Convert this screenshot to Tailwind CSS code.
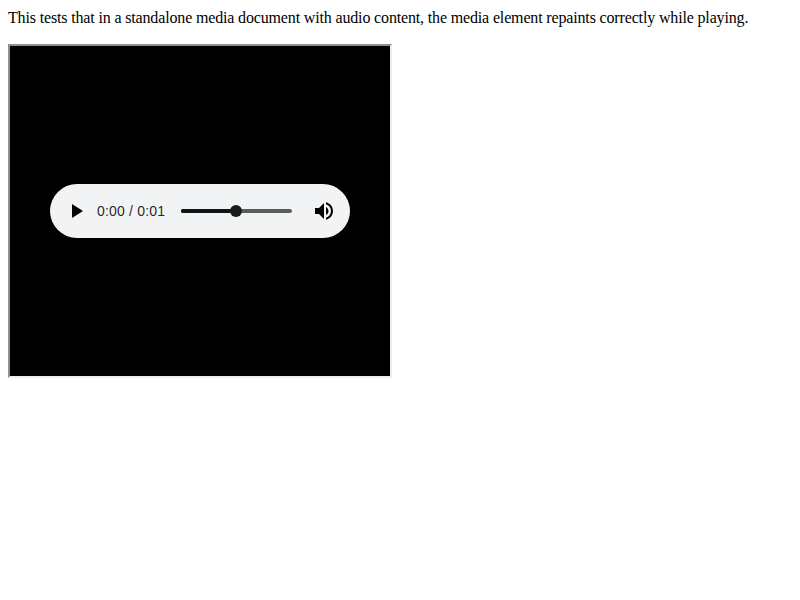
<!DOCTYPE html>
<html lang="en">
<head>
<meta charset="utf-8">
<title>Media document repaint</title>
<script src="https://cdn.jsdelivr.net/npm/@tailwindcss/browser@4"></script>
</head>
<body class="bg-white p-2 text-black">
<p class="font-['Liberation_Serif',serif] text-[16px] leading-[20px] tracking-[-0.154px] whitespace-nowrap">This tests that in a standalone media document with audio content, the media element repaints correctly while playing.</p>
<div class="mt-4 flex h-[334px] w-[384px] items-center justify-center border-2 border-t-[#8f8f8f] border-l-[#8f8f8f] border-r-[#eeeeee] border-b-[#eeeeee] bg-black">
  <div class="flex h-[54px] w-[300px] items-center rounded-full bg-[#f1f3f4]">
    <svg class="ml-[14px] size-6 shrink-0" viewBox="0 0 24 24"><path d="M8 5v14l11-7z"/></svg>
    <span class="ml-[9px] w-[84px] shrink-0 font-['Liberation_Sans',sans-serif] text-[14px] tracking-[0.18px] text-black/87 whitespace-nowrap">0:00 / 0:01</span>
    <div class="relative h-1 w-[111px] shrink-0 rounded-full bg-[#5b5c5c]">
      <div class="h-1 w-1/2 rounded-full bg-[#111414]"></div>
      <div class="absolute -top-1 left-[49px] size-3 rounded-full bg-[#1a1b1b]"></div>
    </div>
    <svg class="ml-5 size-6 shrink-0" viewBox="0 0 24 24"><path d="M3 9v6h4l5 5V4L7 9H3zm13.500 3c0-1.770-1.020-3.290-2.500-4.030v8.050c1.480-.73 2.500-2.250 2.500-4.020zM14 3.230v2.060c2.890.86 5 3.540 5 6.710s-2.110 5.850-5 6.710v2.060c4.010-.91 7-4.490 7-8.770s-2.990-7.860-7-8.770z"/></svg>
  </div>
</div>
</body>
</html>
